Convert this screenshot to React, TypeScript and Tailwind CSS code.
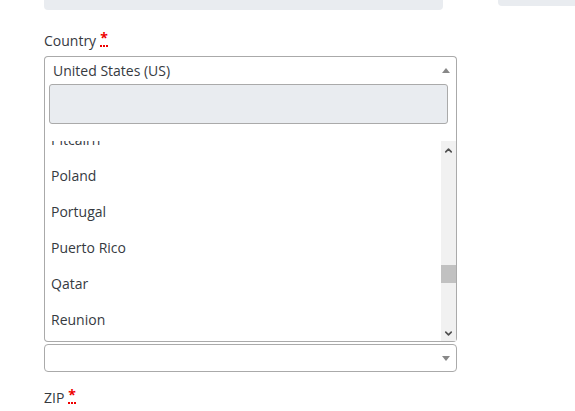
import { ChevronUp, ChevronDown } from 'lucide-react'

const countries = ['Pitcairn', 'Poland', 'Portugal', 'Puerto Rico', 'Qatar', 'Reunion']

function Required() {
  return (
    <abbr
      title="required"
      className="ml-[4px] text-[14px] font-bold text-[#ee0000] no-underline border-b-2 border-dotted border-[#ee0000] leading-none"
    >
      *
    </abbr>
  )
}

function Triangle({ up }: { up?: boolean }) {
  return (
    <span
      className={
        up
          ? 'w-0 h-0 border-x-[4px] border-x-transparent border-b-[5px] border-b-[#888]'
          : 'w-0 h-0 border-x-[4px] border-x-transparent border-t-[5px] border-t-[#888]'
      }
    />
  )
}

export default function App() {
  return (
    <div className="w-[575px] h-[411px] overflow-hidden bg-white text-[#363a3f] font-['Open_Sans',sans-serif] text-[14px]">
      {/* top fields */}
      <div className="flex h-[12px]">
        <div className="ml-[44px] w-[399px] h-[10px] bg-[#e9ecf0] rounded-b-[4px]" />
        <div className="ml-[55px] flex-1 h-[6px] bg-[#e9ecf0] rounded-bl-[4px]" />
      </div>

      {/* country */}
      <div className="mt-[19px] ml-[44px] h-[20px] leading-[20px] flex items-start">
        Country
        <Required />
      </div>

      <div className="mt-[5px] ml-[44px] w-[413px]">
        <div className="border border-b-0 border-[#aaa] rounded-t-[4px]">
          <div className="h-[27px] flex items-center justify-between pl-[8px] pr-[6px]">
            <span className="leading-[27px]">United States (US)</span>
            <Triangle up />
          </div>
          <div className="pl-[4px] pr-[8px]">
            <div className="h-[40px] bg-[#e9ecf0] border border-[#aaa] rounded-[3px]" />
          </div>
        </div>

        {/* results */}
        <div className="border border-t-0 border-[#aaa] rounded-b-[4px] pt-[17px] flex">
          <div className="flex-1 h-[200px] overflow-hidden">
            <ul className="-mt-[20px]">
              {countries.map((c) => (
                <li key={c} className="h-[36px] flex items-center pl-[6px]">
                  {c}
                </li>
              ))}
            </ul>
          </div>
          <div className="w-[15px] h-[200px] bg-[#f1f1f1] flex flex-col items-center">
            <ChevronUp className="w-[11px] h-[11px] mt-[4px] text-[#505050]" strokeWidth={3.5} />
            <div className="mt-[109px] w-full h-[18px] bg-[#c1c1c1]" />
            <ChevronDown className="w-[11px] h-[11px] mt-[45px] text-[#505050]" strokeWidth={3.5} />
          </div>
        </div>

        {/* state */}
        <div className="mt-[2px] h-[28px] border border-[#aaa] rounded-[4px] flex items-center justify-end pr-[6px]">
          <Triangle />
        </div>
      </div>

      {/* zip */}
      <div className="mt-[16px] ml-[44px] h-[20px] leading-[20px] flex items-start">
        ZIP
        <Required />
      </div>
    </div>
  )
}
